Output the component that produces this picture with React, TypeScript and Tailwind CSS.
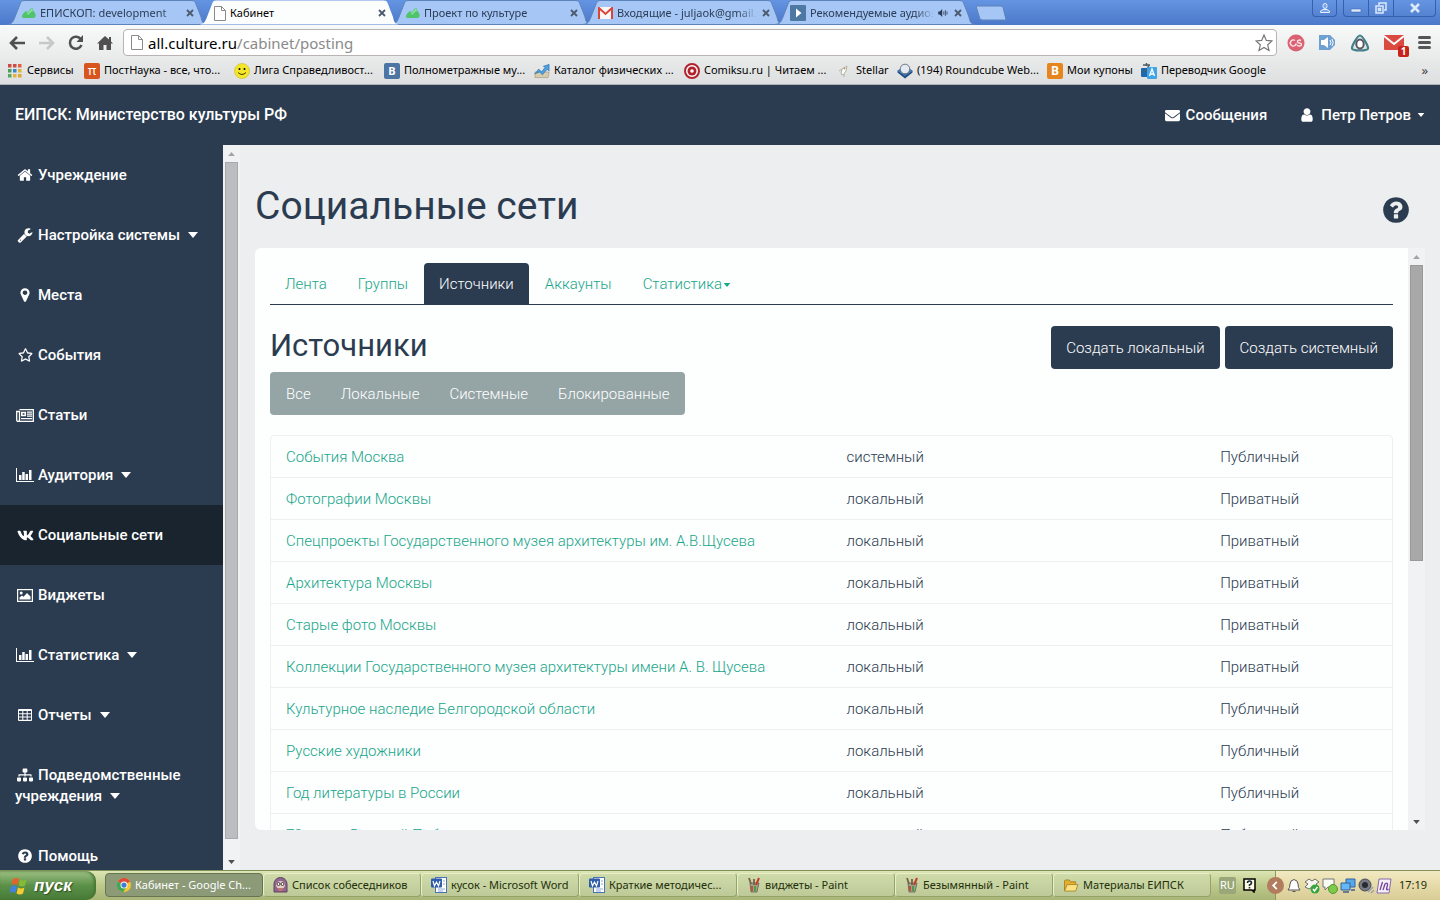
import React from "react";
import { FaRegStar, FaVk, FaSitemap, FaEnvelope } from "react-icons/fa";

type IconProps = { className?: string };

const glyphs = {
  question: "M1024 1376v-192q0-14-9-23t-23-9h-192q-14 0-23 9t-9 23v192q0 14 9 23t23 9h192q14 0 23-9t9-23zm256-672q0-88-55.500-163t-138.500-116-170-41q-243 0-371 213-15 24 8 42l132 100q7 6 19 6 16 0 25-12 53-68 86-92 34-24 86-24 48 0 85.500 26t37.500 59q0 38-20 61t-68 45q-63 28-115.500 86.500t-52.500 125.500v36q0 14 9 23t23 9h192q14 0 23-9t9-23q0-19 21.500-49.500t54.500-49.500q32-18 49-28.500t46-35 44.500-48 28-60.500 12.500-81zm384 192q0 209-103 385.500t-279.500 279.500-385.500 103-385.500-103-279.500-279.500-103-385.500 103-385.500 279.500-279.500 385.500-103 385.500 103 279.500 279.500 103 385.500z",
  home: "M1472 992v480q0 26-19 45t-45 19h-384v-384h-256v384h-384q-26 0-45-19t-19-45v-480q0-1 .5-3t.5-3l575-474 575 474q1 2 1 6zm223-69l-62 74q-8 9-21 11h-3q-13 0-21-7l-692-577-692 577q-12 8-24 7-13-2-21-11l-62-74q-8-10-7-23.500t11-21.500l719-599q32-26 76-26t76 26l244 204v-195q0-14 9-23t23-9h192q14 0 23 9t9 23v408l219 182q10 8 11 21.500t-7 23.500z",
  user: "M1536 1399q0 109-62.500 187t-150.500 78h-854q-88 0-150.500-78t-62.500-187q0-85 8.500-160.500t31.500-152 58.500-131 94-89 134.500-34.500q131 128 313 128t313-128q76 0 134.500 34.500t94 89 58.500 131 31.500 152 8.500 160.500zm-256-887q0 159-112.500 271.500t-271.500 112.500-271.500-112.500-112.500-271.500 112.500-271.500 271.500-112.500 271.500 112.500 112.500 271.500z",
  marker: "M1152 640q0-106-75-181t-181-75-181 75-75 181 75 181 181 75 181-75 75-181zm256 0q0 109-33 179l-364 774q-16 33-47.500 52t-67.500 19-67.500-19-46.500-52l-365-774q-33-70-33-179 0-212 150-362t362-150 362 150 150 362z",
  wrench: "M448 1472q0-26-19-45t-45-19-45 19-19 45 19 45 45 19 45-19 19-45zm644-420l-682 682q-37 37-90 37-52 0-91-37l-106-108q-38-36-38-90 0-53 38-91l681-681q39 98 114.500 173.500t173.500 114.500zm634-435q0 39-23 106-47 134-164.500 217.500t-258.500 83.500q-185 0-316.500-131.500t-131.500-316.500 131.500-316.500 316.500-131.500q58 0 121.500 16.500t107.500 46.500q16 11 16 28t-16 28l-293 169v224l193 107q5-3 79-48.500t135.500-81 70.500-35.500q15 0 23.500 10t8.500 25z",
};

function Glyph({ name, className }: { name: keyof typeof glyphs; className?: string }) {
  return (
    <svg viewBox="0 0 1792 1792" className={className} fill="currentColor" aria-hidden="true">
      <path d={glyphs[name]} />
    </svg>
  );
}

function BarChart({ className }: IconProps) {
  return (
    <svg viewBox="0 0 18 14" className={className} fill="currentColor" aria-hidden="true">
      <path d="M0 0h1v13h17v1H0z" />
      <path d="M3 7h2.500v5H3zM6.200 4h2.500v8H6.200zM9.500 6H12v6H9.500zM13 2h2.500v10H13z" />
    </svg>
  );
}

function Newspaper({ className }: IconProps) {
  return (
    <svg viewBox="0 0 18 13" className={className} aria-hidden="true">
      <path d="M3.500.7h13.800v11.600H2Q.7 12.300.7 11V2.500h2.800V11q0 1.300-1.500 1.300" fill="none" stroke="currentColor" strokeWidth="1.300" />
      <path d="M5.800 3.500h3.500v3H5.800z" fill="none" stroke="currentColor" strokeWidth="1.600" />
      <path d="M11 3.200h5M11 5.200h5M11 7.200h5M5 9.700h11" stroke="currentColor" strokeWidth="1.300" />
    </svg>
  );
}

function Picture({ className }: IconProps) {
  return (
    <svg viewBox="0 0 16 13" className={className} aria-hidden="true">
      <rect x=".6" y=".6" width="14.800" height="11.800" fill="none" stroke="currentColor" strokeWidth="1.200" />
      <circle cx="4.200" cy="4" r="1.500" fill="currentColor" />
      <path d="M2.500 10.500V8.500L5 6.500l1.500 1.300L10 4l3.500 3.500v3z" fill="currentColor" />
    </svg>
  );
}

function TableIcon({ className }: IconProps) {
  return (
    <svg viewBox="0 0 14 12" className={className} aria-hidden="true">
      <rect width="14" height="12" rx="1" fill="currentColor" />
      <path d="M1 2h3.300v2.300H1zM5.300 2h3.400v2.300H5.300zM9.700 2H13v2.300H9.700zM1 5.200h3.300v2.300H1zM5.300 5.200h3.400v2.300H5.300zM9.700 5.200H13v2.300H9.700zM1 8.500h3.300v2.300H1zM5.300 8.500h3.400v2.300H5.300zM9.700 8.500H13v2.300H9.700z" fill="#2c3c50" />
    </svg>
  );
}

function Caret({ className }: IconProps) {
  return (
    <svg viewBox="0 0 10 6" className={className} fill="currentColor" aria-hidden="true">
      <path d="M0 0h10L5 6z" />
    </svg>
  );
}

function LeafIcon() {
  return (
    <svg viewBox="0 0 14 14" className="h-[14px] w-[14px] shrink-0" aria-hidden="true">
      <path d="M0 10c1-3 3-4 4-5 1 0 1 1 2 1s2-4 4-4c1 0 1 3 3 5 1 2 1 4-1 5H2c-2 0-2-1-2-2z" fill="#4fc46c" />
      <path d="M4 5l2 2 4-5 1 3-2 1-3 3z" fill="#8be09c" />
    </svg>
  );
}

function PageIcon() {
  return (
    <svg viewBox="0 0 12 15" className="h-[15px] w-3 shrink-0" aria-hidden="true">
      <path d="M.5.5h7l4 4v10H.5z M7.500.5v4h4" fill="#fff" stroke="#8b8b8b" />
    </svg>
  );
}

function MailLogo() {
  return (
    <svg viewBox="0 0 15 12" className="h-3 w-[15px] shrink-0" aria-hidden="true">
      <path d="M1 0h13v12H1z" fill="#f7f7f7" />
      <path d="M1 12V1l6.500 6L14 1v11" fill="none" stroke="#dc4437" strokeWidth="2" />
    </svg>
  );
}

function PlayIcon() {
  return (
    <svg viewBox="0 0 16 16" className="h-4 w-4 shrink-0" aria-hidden="true">
      <rect width="16" height="16" rx="1" fill="#4d78a3" />
      <path d="M6 3.500L11.500 8 6 12.500z" fill="#fff" />
    </svg>
  );
}

function SpeakerIcon({ className }: IconProps) {
  return (
    <svg viewBox="0 0 12 10" className={className} aria-hidden="true">
      <path d="M0 3h2l3-3v10L2 7H0z" fill="currentColor" />
      <path d="M7 3v4M9 1.500v7M11 3v4" stroke="currentColor" fill="none" />
    </svg>
  );
}

function CloseIcon() {
  return (
    <svg viewBox="0 0 8 8" className="h-2 w-2" aria-hidden="true">
      <path d="M1 1l6 6M7 1L1 7" stroke="#4b5a6d" strokeWidth="1.800" />
    </svg>
  );
}

type TabInfo = { title: string; icon: React.ReactNode; active?: boolean; sound?: boolean };

const browserTabs: TabInfo[] = [
  { title: "ЕПИСКОП: development", icon: <LeafIcon /> },
  { title: "Кабинет", icon: <PageIcon />, active: true },
  { title: "Проект по культуре", icon: <LeafIcon /> },
  { title: "Входящие - juljaok@gmail.c", icon: <MailLogo /> },
  { title: "Рекомендуемые аудиоз", icon: <PlayIcon />, sound: true },
];

function BrowserTab({ tab }: { tab: TabInfo }) {
  return (
    <div className={tab.active ? "relative z-10 -mr-2 h-[25px] w-[200px] shrink" : "relative -mr-2 h-[25px] w-[200px] shrink"}>
      <svg viewBox="0 0 200 25" preserveAspectRatio="none" className="absolute inset-0 h-full w-full" aria-hidden="true">
        <path d="M0 24.500C5 24 6 22 8 17L13 4c1-3 2-3.500 5-3.500h166c3 0 4 .5 5 3.500l5 13c1 5 2 7 6 7.500z" fill={tab.active ? "#fcfdfd" : "#a6c6f5"} stroke={tab.active ? "none" : "#5d83bd"} />
      </svg>
      <div className="relative flex h-[26px] items-center gap-1 pr-[11px] pl-[15px]">
        {tab.icon}
        <span className={tab.active ? "min-w-0 flex-1 whitespace-nowrap text-[11px] text-black" : "min-w-0 flex-1 overflow-hidden whitespace-nowrap text-[11px] text-[#2b3d55] [mask-image:linear-gradient(to_right,black_85%,transparent)]"}>{tab.title}</span>
        {tab.sound && <SpeakerIcon className="mr-[2px] h-2 w-[10px] shrink-0 text-[#2b3d55]" />}
        <button type="button" aria-label="Закрыть вкладку" className="mr-[2px] shrink-0"><CloseIcon /></button>
      </div>
    </div>
  );
}

function WindowButtons() {
  return (
    <div className="flex h-[17px] shrink-0 gap-[6px] pr-1 text-[#d7e6fb]">
      <button type="button" aria-label="Профиль" className="flex w-[25px] items-center justify-center rounded-b border border-t-0 border-[#365fae]">
        <svg viewBox="0 0 10 10" className="h-[10px] w-[10px]"><path d="M3 2.500a2 2 0 0 1 4 0v1a2 2 0 0 1-4 0zM.5 9.500V8L3 6.500h4L9.500 8v1.500z" fill="#7aa2e6" stroke="#e4eefc" /></svg>
      </button>
      <div className="flex rounded-b border border-t-0 border-[#365fae]">
        <button type="button" aria-label="Свернуть" className="flex w-[25px] items-center justify-center border-r border-[#365fae]">
          <svg viewBox="0 0 12 10" className="h-[10px] w-3"><rect x="1" y="6" width="10" height="3" rx="1" fill="#dce9fb" stroke="#34589c" strokeWidth=".5" /></svg>
        </button>
        <button type="button" aria-label="Восстановить" className="flex w-[25px] items-center justify-center border-r border-[#365fae]">
          <svg viewBox="0 0 12 12" className="h-3 w-3" fill="none" stroke="#dce9fb" strokeWidth="1.500"><path d="M4 3V1h7v7H9M1 4h7v7H1zM3.500 6.500h2v2h-2z" /></svg>
        </button>
        <button type="button" aria-label="Закрыть" className="flex w-[41px] items-center justify-center">
          <svg viewBox="0 0 10 10" className="h-[10px] w-[10px]"><path d="M1 1l8 8M9 1L1 9" stroke="#dce9fb" strokeWidth="2.500" /></svg>
        </button>
      </div>
    </div>
  );
}

function Toolbar() {
  return (
    <div className="flex h-8 shrink-0 items-center bg-linear-to-b from-[#f8f9f9] to-[#eaebeb] pt-[3px] pr-[9px] pl-[9px] text-[#555]">
      <button type="button" aria-label="Назад" className="mr-[14px]">
        <svg viewBox="0 0 16 14" className="h-[14px] w-4" fill="none" stroke="#505050" strokeWidth="2.600"><path d="M8 1L2 7l6 6M2 7h14" /></svg>
      </button>
      <button type="button" aria-label="Вперёд" className="mr-[13px]">
        <svg viewBox="0 0 16 14" className="h-[14px] w-4" fill="none" stroke="#c8c8c8" strokeWidth="2.600"><path d="M8 1l6 6-6 6M14 7H0" /></svg>
      </button>
      <button type="button" aria-label="Обновить" className="mr-[13px]">
        <svg viewBox="0 0 16 16" className="h-4 w-4"><path d="M13 4.500A6 6 0 1 0 13.500 10" fill="none" stroke="#505050" strokeWidth="2.500" /><path d="M15 0v7H8.500z" fill="#505050" /></svg>
      </button>
      <button type="button" aria-label="Домой" className="mr-[10px]">
        <svg viewBox="0 0 16 16" className="h-4 w-4" fill="#505050"><path d="M8 1L0 8.500h2V15h4.500v-5h3v5H14V8.500h2l-2-2V2h-2v2.500z" /></svg>
      </button>
      <div className="flex h-[27px] min-w-0 flex-1 items-center rounded-sm border border-[#b9b4b2] bg-white pr-[3px] pl-[7px]">
        <PageIcon />
        <div className="relative ml-[5px] min-w-0 flex-1">
          <input aria-label="Адрес" readOnly value="all.culture.ru/cabinet/posting" className="block w-full bg-transparent text-[15px] leading-6 text-transparent outline-none" />
          <span aria-hidden="true" className="pointer-events-none absolute inset-0 text-[15px] leading-6 text-black">all.culture.ru<span className="text-[#8a8a8a]">/cabinet/posting</span></span>
        </div>
        <button type="button" aria-label="Добавить в закладки">
          <svg viewBox="0 0 18 18" className="h-[18px] w-[18px]"><path d="M9 1l2.300 5.400 5.700.5-4.300 3.900 1.300 5.700L9 13.500l-5 3 1.300-5.700L1 6.900l5.700-.5z" fill="#fff" stroke="#777" strokeWidth="1.200" /></svg>
        </button>
      </div>
      <div className="flex shrink-0 items-center gap-[14px] pl-[10px]">
        <button type="button" aria-label="Last.fm"><svg viewBox="0 0 18 18" className="h-[18px] w-[18px]"><circle cx="9" cy="9" r="8.500" fill="#db6272" /><path d="M8 6.500a3 3 0 1 0 0 5l1.500-2M14 6.500c-2-1-4 0-3.500 1.500s4 .5 4 2.500-3 2-4.500.5" fill="none" stroke="#fbe5e8" strokeWidth="1.400" /></svg></button>
        <button type="button" aria-label="Звук"><svg viewBox="0 0 17 17" className="h-[17px] w-[17px]"><path d="M0 1h11l5 5v5l-5 5H0z" fill="#6fa0d2" /><path d="M2 6h3l4-3v11l-4-3H2z" fill="#fff" /><path d="M11 6q2 2.500 0 5M13 5q2.500 3.500 0 7" fill="none" stroke="#fff" /></svg></button>
        <button type="button" aria-label="Расширение"><svg viewBox="0 0 20 18" className="h-[18px] w-5"><path d="M10 1.500C12.500 1.500 18.500 12 18 14.500c-.4 2.500-15.600 2.500-16 0C1.500 12 7.500 1.500 10 1.500z" fill="#dce8e8" stroke="#45808b" strokeWidth="2.200" /><ellipse cx="10" cy="10" rx="3.700" ry="4.500" fill="#fff" stroke="#5c5560" strokeWidth="2" /></svg></button>
        <button type="button" aria-label="Почта" className="relative"><svg viewBox="0 0 20 16" className="h-4 w-5"><rect width="20" height="15" rx="1" fill="#da4a40" /><path d="M0 1l10 8 10-8" fill="none" stroke="#fff" strokeWidth="2" /></svg><span className="absolute -right-[5px] -bottom-[6px] h-[11px] w-[11px] rounded-xs bg-[#c7231c] text-center text-[10px] leading-[11px] font-bold text-white">1</span></button>
        <button type="button" aria-label="Меню" className="flex w-[13px] flex-col gap-[2px]"><span className="h-[3px] rounded-xs bg-[#555]" /><span className="h-[3px] rounded-xs bg-[#555]" /><span className="h-[3px] rounded-xs bg-[#555]" /></button>
      </div>
    </div>
  );
}

const gridColors = ["#cf4a40", "#cf4a40", "#e5603f", "#4c9c57", "#3d87c9", "#e2b33b", "#5aa85e", "#e8b23c", "#e0a63a"];

const bookmarks: { title: string; width: string; icon: React.ReactNode }[] = [
  { title: "Сервисы", width: "w-[77px]", icon: <svg viewBox="0 0 16 16" className="h-4 w-4 shrink-0">{gridColors.map((c, i) => <rect key={i} x={1 + (i % 3) * 5} y={1 + Math.floor(i / 3) * 5} width="3.500" height="3.500" fill={c} />)}</svg> },
  { title: "ПостНаука - все, что...", width: "w-[150px]", icon: <span className="flex h-4 w-4 shrink-0 items-center justify-center rounded-xs bg-[#d9551f] text-[13px] leading-none text-white">π</span> },
  { title: "Лига Справедливост...", width: "w-[150px]", icon: <svg viewBox="0 0 16 16" className="h-4 w-4 shrink-0"><circle cx="8" cy="8" r="7.500" fill="#f4e629" stroke="#c8b921" strokeWidth=".6" /><circle cx="5.500" cy="6" r="1" /><circle cx="10.500" cy="6" r="1" /><path d="M4 9.500q4 4 8 0" fill="none" stroke="#443b00" /></svg> },
  { title: "Полнометражные му...", width: "w-[150px]", icon: <span className="flex h-4 w-4 shrink-0 items-center justify-center rounded-xs bg-[#4d75a3] text-[11px] leading-none font-bold text-white">В</span> },
  { title: "Каталог физических ...", width: "w-[150px]", icon: <svg viewBox="0 0 17 16" className="h-4 w-4 shrink-0"><path d="M1 9h15l-1 6H1z" fill="#d8ccae" stroke="#9b8f70" strokeWidth=".6" /><path d="M1 11l4-5 3 3 4-5-2-1 6-2v7l-2-2-5 6-3-3z" fill="#4ba3e3" stroke="#286da8" strokeWidth=".7" /></svg> },
  { title: "Comiksu.ru | Читаем ...", width: "w-[152px]", icon: <svg viewBox="0 0 16 16" className="h-4 w-4 shrink-0"><circle cx="8" cy="8" r="7" fill="#fff" stroke="#b2222b" strokeWidth="2" /><circle cx="8" cy="8" r="4.500" fill="#b2222b" /><circle cx="8" cy="8" r="1.800" fill="#fff" /></svg> },
  { title: "Stellar", width: "w-[61px]", icon: <svg viewBox="0 0 16 16" className="h-4 w-4 shrink-0"><path d="M5 11l1-5 5-3-1 5-3 4zM3 8l3-2M8 11v3" fill="#fff" stroke="#aeb49f" /><circle cx="8.500" cy="5.500" r="1" fill="#c98d62" /></svg> },
  { title: "(194) Roundcube Web...", width: "w-[150px]", icon: <svg viewBox="0 0 16 16" className="h-4 w-4 shrink-0"><path d="M.5 7.500l7.500 5 7.500-5v2L8 15.500.5 9.500z" fill="#1f4e84" /><path d="M.5 7.500L8 3l7.500 4.500L8 13z" fill="#3d76b0" /><circle cx="8" cy="6" r="4.800" fill="#e4eaf0" stroke="#51606f" strokeWidth=".8" /></svg> },
  { title: "Мои купоны", width: "w-[94px]", icon: <span className="flex h-4 w-4 shrink-0 items-center justify-center rounded-xs bg-[#e6851e] text-[12px] leading-none font-bold text-white">B</span> },
  { title: "Переводчик Google", width: "w-[130px]", icon: <svg viewBox="0 0 16 16" className="h-4 w-4 shrink-0"><rect x="0" y="5" width="10" height="9" rx="1" fill="#1d69ad" /><path d="M2 2h7M5.500 0v3M8 2q-2 6-6 7" fill="none" stroke="#4f5d66" strokeWidth="1.500" /><rect x="6" y="4" width="10" height="12" rx="1" fill="#41a4e5" /><path d="M8.500 13l2.500-7 2.500 7M9.500 11h3" fill="none" stroke="#fff" strokeWidth="1.300" /></svg> },
];

function BookmarksBar() {
  return (
    <div className="flex h-7 shrink-0 items-center border-b border-[#b0b3b6] bg-linear-to-b from-[#e9eaea] to-[#dedfe0] pr-3 pl-[7px]">
      <div className="flex min-w-0 flex-1 overflow-hidden">
        {bookmarks.map((b) => (
          <a key={b.title} href="#bookmark" className={`flex shrink-0 items-center gap-1 text-[11px] whitespace-nowrap text-black ${b.width}`}>
            {b.icon}{b.title}
          </a>
        ))}
      </div>
      <button type="button" aria-label="Другие закладки" className="text-[13px] text-[#444]">»</button>
    </div>
  );
}

function AppHeader() {
  return (
    <header className="flex h-[60px] shrink-0 items-center justify-between bg-[#2c3c50] px-[15px] text-white">
      <a href="#home" className="text-base font-medium">ЕИПСК: Министерство культуры РФ</a>
      <nav className="flex items-center gap-8 text-[15px] font-medium">
        <a href="#messages" className="flex items-center gap-[6px]"><FaEnvelope className="h-[15px] w-[15px]" />Сообщения</a>
        <button type="button" className="flex items-center gap-[6px]"><Glyph name="user" className="h-4 w-4" />Петр Петров<Caret className="h-1 w-2" /></button>
      </nav>
    </header>
  );
}

const menu: { label: string; icon: React.ReactNode; caret?: boolean; active?: boolean }[] = [
  { label: "Учреждение", icon: <Glyph name="home" className="h-4 w-4" /> },
  { label: "Настройка системы", icon: <Glyph name="wrench" className="h-4 w-4" />, caret: true },
  { label: "Места", icon: <Glyph name="marker" className="h-4 w-4" /> },
  { label: "События", icon: <FaRegStar className="h-[14px] w-[15px]" /> },
  { label: "Статьи", icon: <Newspaper className="h-[13px] w-[18px]" /> },
  { label: "Аудитория", icon: <BarChart className="h-[14px] w-[18px]" />, caret: true },
  { label: "Социальные сети", icon: <FaVk className="h-[17px] w-[17px]" />, active: true },
  { label: "Виджеты", icon: <Picture className="h-[13px] w-4" /> },
  { label: "Статистика", icon: <BarChart className="h-[14px] w-[18px]" />, caret: true },
  { label: "Отчеты", icon: <TableIcon className="h-3 w-[14px]" />, caret: true },
  { label: "Подведомственные учреждения", icon: <FaSitemap className="h-[14px] w-[16px]" />, caret: true },
  { label: "Помощь", icon: <Glyph name="question" className="h-4 w-4" /> },
];

function Sidebar() {
  return (
    <nav className="min-w-0 flex-1 overflow-hidden bg-[#2c3c50]">
      <ul>
        {menu.map((m) => (
          <li key={m.label}>
            <a href="#section" className={m.active ? "block bg-[#1a242f] pt-5 pr-2 pb-[19px] pl-[15px] text-[15px] leading-[21px] font-medium text-white" : "block pt-5 pr-2 pb-[19px] pl-[15px] text-[15px] leading-[21px] font-medium text-white"}>
              <span className="mr-[3px] mb-[2px] inline-flex h-[15px] w-5 items-center justify-center align-middle">{m.icon}</span>
              {m.label}
              {m.caret && <Caret className="mb-[2px] ml-2 inline h-[6px] w-[10px] align-middle" />}
            </a>
          </li>
        ))}
      </ul>
    </nav>
  );
}

function ScrollBar({ long }: { long?: boolean }) {
  return (
    <div aria-hidden="true" className="flex w-[17px] shrink-0 flex-col items-center bg-[#f1f2f3]">
      <div className="flex h-[17px] shrink-0 items-center justify-center text-[#a3a3a3]"><Caret className="h-1 w-[7px] rotate-180" /></div>
      <div className="flex min-h-0 w-[13px] flex-1 flex-col">
        <div className={long ? "h-[98%] border border-[#a8a8a8] bg-[#bcbdc0]" : "h-[54%] border border-[#999] bg-[#a8a8a8]"} />
      </div>
      <div className="flex h-[17px] shrink-0 items-center justify-center text-[#505050]"><Caret className="h-1 w-[7px]" /></div>
    </div>
  );
}

const tabs = ["Лента", "Группы", "Источники", "Аккаунты", "Статистика"];
const filters = ["Все", "Локальные", "Системные", "Блокированные"];
const sources: [string, string, string][] = [
  ["События Москва", "системный", "Публичный"],
  ["Фотографии Москвы", "локальный", "Приватный"],
  ["Спецпроекты Государственного музея архитектуры им. А.В.Щусева", "локальный", "Приватный"],
  ["Архитектура Москвы", "локальный", "Приватный"],
  ["Старые фото Москвы", "локальный", "Приватный"],
  ["Коллекции Государственного музея архитектуры имени А. В. Щусева", "локальный", "Приватный"],
  ["Культурное наследие Белгородской области", "локальный", "Публичный"],
  ["Русские художники", "локальный", "Публичный"],
  ["Год литературы в России", "локальный", "Публичный"],
  ["70-летие Великой Победы", "локальный", "Публичный"],
];

function SourcesPanel() {
  return (
    <div className="min-w-0 flex-1 overflow-hidden rounded-l-md bg-[#fdfefe] p-[15px] text-[15px] font-light text-[#2c3c50]">
      <div className="flex h-[42px] gap-px border-b border-[#2c3c50]">
        {tabs.map((t) => (
          <a key={t} href="#tab" className={t === "Источники" ? "flex items-center rounded-t bg-[#2c3c50] px-[15px] pt-[2px] text-white" : "flex items-center gap-px px-[15px] pt-[2px] text-[#18a689]"}>
            {t}{t === "Статистика" && <Caret className="h-1 w-2" />}
          </a>
        ))}
      </div>
      <div className="mt-[21px] flex items-start justify-between">
        <h2 className="pt-px text-[31px] leading-[38px] font-normal">Источники</h2>
        <div className="flex gap-[5px]">
          <button type="button" className="h-[43px] rounded bg-[#2c3c50] px-[15px] pt-[2px] text-white">Создать локальный</button>
          <button type="button" className="h-[43px] rounded bg-[#2c3c50] px-[15px] pt-[2px] text-white">Создать системный</button>
        </div>
      </div>
      <div className="mt-[3px] flex h-[43px] w-fit rounded bg-[#95a5a6] pl-px text-white">
        {filters.map((f) => <button key={f} type="button" className="px-[15px] pt-[2px]">{f}</button>)}
      </div>
      <div className="mt-5 rounded border border-[#ecf0f1]">
        <table className="w-full table-fixed border-separate border-spacing-0">
          <tbody>
            {sources.map(([name, kind, access]) => (
              <tr key={name} className="h-[42px]">
                <td className="w-1/2 border-b border-[#ecf0f1] px-[15px] pt-[2px] whitespace-nowrap"><a href="#source" className="text-[#18a689]">{name}</a></td>
                <td className="w-1/3 border-b border-[#ecf0f1] px-[15px] pt-[2px]">{kind}</td>
                <td className="w-1/6 border-b border-[#ecf0f1] px-[15px] pt-[2px]">{access}</td>
              </tr>
            ))}
          </tbody>
        </table>
      </div>
    </div>
  );
}

function WordIcon() {
  return <svg viewBox="0 0 16 16" className="h-4 w-4 shrink-0"><rect x="4.500" y=".5" width="11" height="15" fill="#fff" stroke="#4b72b8" /><path d="M12 4h2M12 7h2M7 12h7M7 14h5" stroke="#8aa7d8" /><rect x="0" y="1.500" width="11" height="9" rx="1" fill="#2f5cab" /><path d="M2 4l1.500 5 2-4 2 4L9 4" fill="none" stroke="#fff" strokeWidth="1.200" /></svg>;
}

function PaintIcon() {
  return <svg viewBox="0 0 14 16" className="h-4 w-[14px] shrink-0"><path d="M3 6l1 9h6l2-9z" fill="#9ba58a" stroke="#66604c" strokeWidth=".8" /><path d="M4 7L2 1M7 8V2" stroke="#76604a" strokeWidth="1.800" /><path d="M9 8l3-7" stroke="#c13d2c" strokeWidth="2" /><path d="M5 9v5" stroke="#c94b38" strokeWidth="2" /><path d="M8 9v5" stroke="#4a9a4c" strokeWidth="2" /></svg>;
}

const tasks: { title: string; icon: React.ReactNode; active?: boolean }[] = [
  { title: "Кабинет - Google Ch...", active: true, icon: <svg viewBox="0 0 16 16" className="h-[14px] w-[14px] shrink-0"><circle cx="8" cy="8" r="8" fill="#f6c62f" /><path d="M8 8L1 4a8 8 0 0 1 14 0z" fill="#dd4b3a" /><path d="M8 8L1 4a8 8 0 0 0 6 12l4-6z" fill="#3fa757" /><circle cx="8" cy="8" r="4" fill="#fff" /><circle cx="8" cy="8" r="3" fill="#3e7ed0" /></svg> },
  { title: "Список собеседников", icon: <svg viewBox="0 0 15 16" className="h-4 w-[15px] shrink-0"><path d="M1 15V7a6.500 6.500 0 0 1 13 0v8z" fill="#8d6790" stroke="#60415f" /><ellipse cx="7.500" cy="8" rx="4.500" ry="4" fill="#e7cfc5" /><circle cx="5.500" cy="7" r="1.500" fill="#fff" stroke="#403038" /><circle cx="9.500" cy="7" r="1.500" fill="#fff" stroke="#403038" /><path d="M5 11h5l-1 3H6z" fill="#c5766a" /></svg> },
  { title: "кусок - Microsoft Word", icon: <WordIcon /> },
  { title: "Краткие методичес...", icon: <WordIcon /> },
  { title: "виджеты - Paint", icon: <PaintIcon /> },
  { title: "Безымянный - Paint", icon: <PaintIcon /> },
  { title: "Материалы ЕИПСК", icon: <svg viewBox="0 0 16 14" className="h-[13px] w-4 shrink-0"><path d="M1 12V2l1-1h4l1.500 2H13v9z" fill="#e4ae2e" stroke="#9d7417" strokeWidth=".8" /><path d="M1 13l3-7h11.500L13 13z" fill="#fae282" stroke="#a07a1b" strokeWidth=".8" /></svg> },
];

function Taskbar() {
  return (
    <footer className="flex h-[30px] shrink-0 items-stretch border-t border-[#7f9058] bg-linear-to-b from-[#dce5b4] via-[#bdca8c] to-[#a8b576] text-[11px] text-[#23300a]">
      <button type="button" className="mr-[9px] flex w-24 shrink-0 items-center gap-[5px] rounded-r-[10px] bg-linear-to-b from-[#9fc184] via-[#5b9048] to-[#467a38] pl-[9px] text-white shadow-[inset_-2px_0_3px_#47752f]">
        <svg viewBox="0 0 20 18" className="h-[18px] w-5"><path d="M4 2q3-2 6 0L8.500 8q-3-2-6 0z" fill="#e4622c" /><path d="M11 2.500q3 2 6.500 0L16 8.500q-3 2-6.500 0z" fill="#83bd35" /><path d="M2 9.500q3-2 6 0L6.500 16q-3-2-6 0z" fill="#4382dc" /><path d="M9 10.500q3 2 6.500 0L14 16.500q-3 2-6.500 0z" fill="#f6cc30" /></svg>
        <span className="text-[17px] leading-none font-bold italic [text-shadow:1px_1px_1px_#2f5020] font-['Liberation_Sans',sans-serif]">пуск</span>
      </button>
      <div className="flex min-w-0 flex-1 items-stretch pt-[2px] pb-[3px]">
        {tasks.map((t) => (
          <button key={t.title} type="button" className={t.active ? "flex max-w-[158px] min-w-0 flex-1 items-center gap-1 rounded-sm border border-[#687553] bg-[#8c9a78] pl-[11px] whitespace-nowrap text-white" : "flex max-w-[158px] min-w-0 flex-1 items-center gap-1 overflow-hidden rounded-sm border border-[#94a468] border-t-[#e8efca] border-l-[#e8efca] bg-linear-to-b from-[#d0dbaa] to-[#bdca98] pl-[9px] whitespace-nowrap"}>
            {t.icon}{t.title}
          </button>
        ))}
      </div>
      <div className="flex shrink-0 items-center gap-[7px] pr-[19px] pl-[8px]">
        <span className="rounded-xs bg-[#9aa879] px-[1px] text-white">RU</span>
        <svg viewBox="0 0 13 15" className="h-[15px] w-[13px]"><path d="M1 1h11v11h-1v2l-2-2H1z" fill="#fffbe0" stroke="#000" strokeWidth="1.500" /><path d="M4.500 5q0-2 2-2t2 2q0 1-2 2v1M6.500 9v1.500" fill="none" stroke="#14213f" strokeWidth="1.600" /></svg>
      </div>
      <div className="relative flex shrink-0 items-center gap-[2px] border-l border-[#8b9a5a] bg-linear-to-b from-[#f2e9c2] via-[#e6dba9] to-[#d8cc96] pr-[13px] pl-[10px]">
        <button type="button" aria-label="Скрытые значки" className="absolute top-[6px] -left-[9px] flex h-[17px] w-[17px] items-center justify-center rounded-full bg-[#b27c5e]">
          <svg viewBox="0 0 8 10" className="h-[9px] w-2"><path d="M6 1L2 5l4 4" fill="none" stroke="#fff" strokeWidth="2" /></svg>
        </button>
        <svg viewBox="0 0 16 16" className="h-4 w-4"><path d="M2 12q2-2 2-6 0-3.500 4-4.500 4 1 4 4.500 0 4 2 6zM6.500 13.500h3" fill="#fff" stroke="#555" /></svg>
        <svg viewBox="0 0 16 16" className="h-4 w-4"><path d="M1 4l4-3 3 2 3-2 4 3-3 2 3 3-4 2-3-2-3 2-4-2 3-3z" fill="#f6f6ef" stroke="#6d7069" /><circle cx="11" cy="11" r="4.500" fill="#36a53b" /><path d="M9 11l1.500 2 3-4" fill="none" stroke="#fff" strokeWidth="1.400" /></svg>
        <svg viewBox="0 0 16 16" className="h-4 w-4"><path d="M1 1h11v8H6l-3 3V9H1z" fill="#fbfbf5" stroke="#777" /><circle cx="11" cy="11" r="4.500" fill="#80c949" stroke="#4d9830" /></svg>
        <svg viewBox="0 0 16 16" className="h-4 w-4"><path d="M6 1h9v8H6z" fill="#56a8ec" stroke="#33639d" /><path d="M1 5h9v7H1z" fill="#66b7f5" stroke="#33639d" /><path d="M3 14h6M11 12h4" stroke="#6c7993" strokeWidth="2" /></svg>
        <svg viewBox="0 0 16 16" className="h-4 w-4"><circle cx="7" cy="7" r="6" fill="#777c84" stroke="#4a4d54" /><circle cx="7" cy="7" r="3" fill="#292b30" /><path d="M10 14l5-5M13 15l3-3" stroke="#9aa0ab" strokeWidth="1.500" /></svg>
        <svg viewBox="0 0 16 16" className="h-4 w-4"><path d="M3 1h12l-2 14H1z" fill="#f4eef9" stroke="#8a6aa8" /><path d="M4 12l2.500-8M7 12l2-6q3-2 2.500 1l-1 4q0 1.500 2 0" fill="none" stroke="#774499" strokeWidth="1.300" /></svg>
        <time className="ml-[5px]">17:19</time>
      </div>
    </footer>
  );
}

export default function App() {
  return (
    <div className="flex h-screen flex-col overflow-hidden bg-[#eceef0] font-['Roboto',sans-serif]">
      <div className="flex shrink-0 flex-col font-['Noto_Sans',sans-serif]">
        <div className="flex h-[25px] items-start justify-between bg-linear-to-b from-[#6495e2] to-[#4c78c9] pl-[7px]">
          <div className="flex min-w-0 items-start">
            {browserTabs.map((t) => <BrowserTab key={t.title} tab={t} />)}
            <button type="button" aria-label="Новая вкладка" className="mt-[5px] ml-2 h-4">
              <svg viewBox="0 0 32 16" className="h-4 w-8"><path d="M1 1h25l2 1 3 13H7l-2-1z" fill="#a6c6f5" stroke="#5d83bd" /></svg>
            </button>
          </div>
          <WindowButtons />
        </div>
        <Toolbar />
        <BookmarksBar />
      </div>
      <AppHeader />
      <div className="flex min-h-0 flex-1">
        <div className="flex w-60 shrink-0">
          <Sidebar />
          <ScrollBar long />
        </div>
        <main className="flex min-w-0 flex-1 flex-col px-[15px] pb-10">
          <div className="flex h-[103px] shrink-0 items-center justify-between pt-5 pr-[14px] text-[#2c3c50]">
            <h1 className="text-[39px] leading-[43px] font-normal">Социальные сети</h1>
            <button type="button" aria-label="Справка" className="pt-[7px]"><Glyph name="question" className="h-[30px] w-[30px]" /></button>
          </div>
          <div className="flex min-h-0 flex-1">
            <SourcesPanel />
            <ScrollBar />
          </div>
        </main>
      </div>
      <div className="shrink-0 font-['Noto_Sans',sans-serif]"><Taskbar /></div>
    </div>
  );
}
